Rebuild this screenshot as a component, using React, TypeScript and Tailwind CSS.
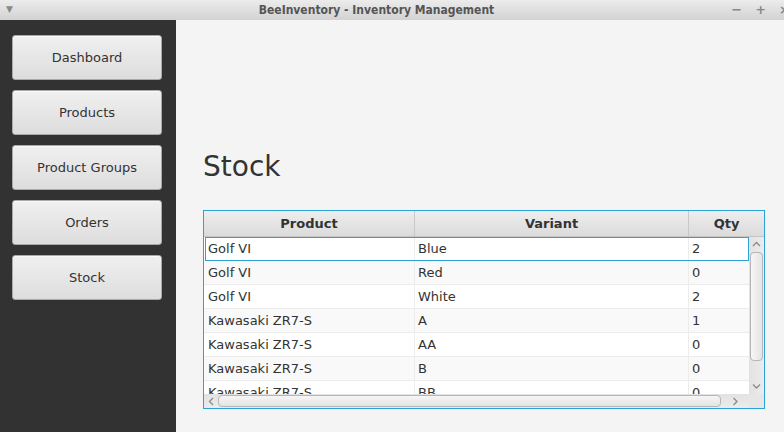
import React from 'react';

const navItems = ['Dashboard', 'Products', 'Product Groups', 'Orders', 'Stock'];

const rows = [
  { product: 'Golf VI', variant: 'Blue', qty: 2 },
  { product: 'Golf VI', variant: 'Red', qty: 0 },
  { product: 'Golf VI', variant: 'White', qty: 2 },
  { product: 'Kawasaki ZR7-S', variant: 'A', qty: 1 },
  { product: 'Kawasaki ZR7-S', variant: 'AA', qty: 0 },
  { product: 'Kawasaki ZR7-S', variant: 'B', qty: 0 },
  { product: 'Kawasaki ZR7-S', variant: 'BB', qty: 0 },
];

const Chevron = ({ dir }: { dir: 'up' | 'down' | 'left' | 'right' }) => {
  const d = {
    up: 'M1 5 L4.5 1.5 L8 5',
    down: 'M1 1.5 L4.5 5 L8 1.5',
    left: 'M5 1 L1.5 4.5 L5 8',
    right: 'M1.5 1 L5 4.5 L1.5 8',
  }[dir];
  const horiz = dir === 'up' || dir === 'down';
  return (
    <svg width={horiz ? 9 : 7} height={horiz ? 7 : 9} viewBox={horiz ? '0 0 9 7' : '0 0 7 9'} fill="none">
      <path d={d} stroke="#8a8a8a" strokeWidth="1.3" />
    </svg>
  );
};

export default function App() {
  return (
    <div className="w-[784px] h-[432px] flex flex-col overflow-hidden bg-[#f4f4f4] text-[#333]" style={{ fontFamily: '"DejaVu Sans", sans-serif' }}>
      {/* TITLE BAR */}
      <div className="h-[20px] shrink-0 flex items-center relative bg-gradient-to-b from-[#ececec] to-[#d2d2d2]">
        <span className="absolute left-[6px] top-[3px] text-[9px] leading-[12px] text-[#888]">▼</span>
        <div
          className="flex-1 text-center text-[12px] font-bold text-[#555] leading-[20px] pr-[31px]"
          style={{ fontFamily: '"DejaVu Sans Condensed", "DejaVu Sans", sans-serif', fontStretch: 'condensed' }}
        >
          BeeInventory - Inventory Management
        </div>
        <div className="absolute right-[-6px] top-0 h-[20px] flex items-center gap-[13px] text-[13px] font-bold text-[#888]">
          <span>−</span>
          <span>+</span>
          <span>×</span>
        </div>
      </div>

      <div className="flex flex-1 min-h-0">
        {/* SIDEBAR */}
        <div className="w-[176px] shrink-0 bg-[#323232] pt-[15px] pl-[12px] flex flex-col gap-[10px]">
          {navItems.map((item) => (
            <button
              key={item}
              className="w-[150px] h-[45px] shrink-0 rounded-[3px] border border-[#a9a9a9] bg-gradient-to-b from-[#f0f0f0] to-[#dddddd] text-[13px] text-[#333] shadow-[inset_0_1px_0_#fafafa]"
            >
              {item}
            </button>
          ))}
        </div>

        {/* MAIN */}
        <div className="flex-1 pl-[27px] pr-[19px] pt-[130px]">
          <h1 className="text-[28px] leading-[34px] text-[#333]">Stock</h1>

          <div className="mt-[26px] h-[199px] border border-[#2aa4d8] bg-white flex flex-col">
            {/* HEADER */}
            <div className="h-[26px] shrink-0 flex bg-gradient-to-b from-[#eeeeee] to-[#dbdbdb] border-b border-[#c4c4c4] text-[13px] font-bold">
              <div className="w-[211px] flex items-center justify-center border-r border-[#c8c8c8]">Product</div>
              <div className="w-[274px] flex items-center justify-center border-r border-[#c8c8c8]">Variant</div>
              <div className="flex-1 flex items-center justify-center">Qty</div>
            </div>

            {/* BODY */}
            <div className="flex flex-1 min-h-0">
              <div className="flex-1 overflow-hidden">
                {rows.map((r, i) => (
                  <div
                    key={i}
                    className={`h-[24px] flex text-[13px] ${i % 2 === 0 ? 'bg-white' : 'bg-[#f9f9f9]'} ${
                      i === 0 ? 'border border-[#2aa4d8] ml-[1px]' : 'border-b border-[#ececec]'
                    }`}
                  >
                    <div className={`${i === 0 ? 'w-[209px] pl-[2px]' : 'w-[211px] pl-[4px]'} flex items-center border-r border-[#ececec]`}>{r.product}</div>
                    <div className="w-[274px] flex items-center pl-[3px] border-r border-[#ececec]">{r.variant}</div>
                    <div className="flex-1 flex items-center pl-[3px]">{r.qty}</div>
                  </div>
                ))}
              </div>

              {/* VERTICAL SCROLLBAR */}
              <div className="w-[15px] shrink-0 bg-gradient-to-r from-[#e2e2e2] to-[#ececec] flex flex-col items-center">
                <div className="h-[15px] flex items-center justify-center">
                  <Chevron dir="up" />
                </div>
                <div className="w-[13px] h-[109px] rounded-[4px] border border-[#b6b6b6] bg-gradient-to-r from-[#f6f6f6] to-[#e4e4e4]" />
                <div className="flex-1" />
                <div className="h-[15px] flex items-center justify-center">
                  <Chevron dir="down" />
                </div>
              </div>
            </div>

            {/* HORIZONTAL SCROLLBAR */}
            <div className="h-[14px] shrink-0 flex bg-gradient-to-b from-[#e2e2e2] to-[#ececec]">
              <div className="w-[14px] flex items-center justify-center">
                <Chevron dir="left" />
              </div>
              <div className="w-[503px] h-[12px] mt-[1px] rounded-[4px] border border-[#b6b6b6] bg-gradient-to-b from-[#f6f6f6] to-[#e4e4e4]" />
              <div className="flex-1 flex items-center justify-center">
                <Chevron dir="right" />
              </div>
              <div className="w-[15px] bg-[#e6e6e6]" />
            </div>
          </div>
        </div>
      </div>
    </div>
  );
}
